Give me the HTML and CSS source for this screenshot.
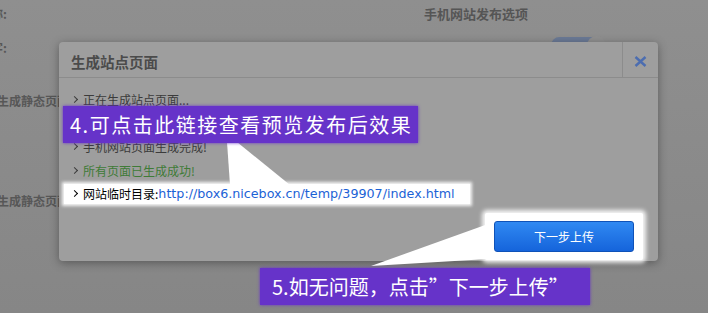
FILE: index.html
```html
<!DOCTYPE html>
<html lang="zh-CN">
<head>
  <meta charset="UTF-8">
  <meta name="viewport" content="width=device-width, initial-scale=1.0">
  <title>生成站点页面</title>
  <link rel="stylesheet" href="styles.css">
</head>
<body>
  <!-- page behind the modal -->
  <div class="page">
    <div class="page-row row-1">
      <span class="field cut">名称:</span>
      <h2 class="page-title">手机网站发布选项</h2>
    </div>
    <div class="page-row row-2">
      <span class="field cut">关键字:</span>
      <span class="switch"><i></i></span>
    </div>
    <div class="page-row row-3">
      <span class="field">生成静态页面:</span>
    </div>
    <div class="page-row row-4">
      <span class="field">生成静态页面:</span>
    </div>
  </div>

  <div class="dialog">
    <div class="dialog-head">
      <h3>生成站点页面</h3>
      <a class="dialog-close" href="#">
        <svg width="13" height="11" viewBox="0 0 13 11"><path d="M1.5 1 L11.5 10 M11.5 1 L1.5 10" stroke="#4c6db0" stroke-width="2.4" fill="none"/></svg>
      </a>
    </div>
    <ul class="log">
      <li><i class="arr"></i>正在生成站点页面...</li>
      <li><i class="arr"></i>正在生成手机网站页面...</li>
      <li><i class="arr"></i>手机网站页面生成完成!</li>
      <li class="ok"><i class="arr"></i>所有页面已生成成功!</li>
      <li class="mark"><span class="hl"><i class="arr"></i>网站临时目录:<a href="#">http://box6.nicebox.cn/temp/39907/index.html</a></span></li>
    </ul>
    <div class="dialog-foot">
      <span class="glow"><button type="button" class="btn-next">下一步上传</button></span>
    </div>
  </div>

  <svg class="pointers" width="708" height="313" viewBox="0 0 708 313">
    <polygon points="227,142 237,142 290,185 230,185" fill="#fff"/>
    <polygon points="371,266 488,224 488,259" fill="#fff"/>
  </svg>

  <div class="note note-link">4.可点击此链接查看预览发布后效果</div>
  <div class="note note-next">5.如无问题，点击”下一步上传”</div>
</body>
</html>
```

FILE: styles.css
```css
* {
  box-sizing: border-box;
}

body {
  margin: 0;
  width: 708px;
  height: 313px;
  overflow: hidden;
  position: relative;
  font-family: "Noto Sans CJK SC", sans-serif;
  font-size: 12px;
  color: #3b3b3b;
  background: linear-gradient(#8f8f8f, #868686);
}

/* background page */
.page-row {
  display: flex;
  align-items: center;
}

.row-1 { height: 26px; }
.row-2 { height: 42px; }
.row-3 { height: 64px; }
.row-4 { height: 136px; }

.field {
  width: 64px;
  margin-left: -3px;
  font-weight: bold;
  color: #575757;
  white-space: nowrap;
}

.field.cut {
  margin-left: -57px;
  text-align: right;
}

.page-title {
  margin: 0 0 0 417px;
  font-size: 13px;
  font-weight: bold;
  color: #555;
}

.switch {
  margin-left: 544px;
  margin-top: -4px;
  width: 54px;
  height: 17px;
  border-radius: 9px;
  background: #6b7a96;
  position: relative;
}

.switch i {
  position: absolute;
  right: -1px;
  top: -1px;
  width: 19px;
  height: 19px;
  border-radius: 50%;
  background: #909090;
}

/* modal */
.dialog {
  position: absolute;
  left: 59px;
  top: 42px;
  width: 599px;
  height: 219px;
  background: #9e9e9e;
  border-radius: 4px;
  box-shadow: 0 2px 10px rgba(0, 0, 0, 0.35);
  display: flex;
  flex-direction: column;
}

.dialog-head {
  display: flex;
  height: 36px;
  border-bottom: 1px solid #8c8c8c;
}

.dialog-head h3 {
  flex: 1;
  margin: 0;
  padding: 5px 0 0 12px;
  font-size: 14.5px;
  line-height: 30px;
  font-weight: bold;
  color: #4b4b4b;
}

.dialog-close {
  width: 36px;
  border-left: 1px solid #8c8c8c;
  display: flex;
  align-items: center;
  justify-content: center;
  padding-top: 3px;
}

.log {
  list-style: none;
  margin: 0;
  padding: 10px 0 0 5px;
}

.log li {
  display: flex;
  align-items: center;
  height: 23.5px;
  padding-left: 9px;
  white-space: nowrap;
}

.arr {
  width: 5px;
  height: 5px;
  margin: 0 6px 0 -1px;
  border-top: 1.6px solid currentColor;
  border-right: 1.6px solid currentColor;
  transform: rotate(45deg);
}

.log li.ok {
  color: #3f7b37;
}

.log li.ok .arr {
  color: #3b3b3b;
}

.log li.mark {
  padding-left: 0;
}

.hl {
  display: flex;
  align-items: center;
  height: 20px;
  padding: 0 15px 0 9px;
  background: #fff;
  box-shadow: 0 0 3px 2px rgba(255, 255, 255, 0.9);
  color: #000;
}

.hl a {
  font-family: "DejaVu Sans", sans-serif;
  font-size: 12.7px;
  color: #1b62d6;
  text-decoration: none;
}

.dialog-foot {
  display: flex;
  justify-content: flex-end;
  padding: 7px 15px 0 0;
}

.glow {
  padding: 8px 9px;
  background: #fff;
  border-radius: 2px;
  box-shadow: 0 0 4px 3px rgba(255, 255, 255, 0.9);
}

.btn-next {
  display: block;
  width: 140px;
  height: 31px;
  border: 1px solid #0f52b8;
  border-radius: 3px;
  background: linear-gradient(#3089f2, #1564db);
  color: #fff;
  font-family: "Noto Sans CJK SC", sans-serif;
  font-size: 12px;
}

/* annotations */
.pointers {
  position: absolute;
  left: 0;
  top: 0;
  pointer-events: none;
}

.note {
  position: absolute;
  background: #6633c9;
  color: #fff;
  font-size: 20px;
  white-space: nowrap;
  box-shadow: 0 0 3px #6633c9;
}

.note-link {
  left: 63px;
  top: 106px;
  width: 355px;
  height: 37px;
  line-height: 37px;
  padding-left: 7px;
  letter-spacing: 1.5px;
}

.note-next {
  left: 260px;
  top: 268px;
  width: 330px;
  height: 37px;
  line-height: 37px;
  padding-left: 12px;
}
```
